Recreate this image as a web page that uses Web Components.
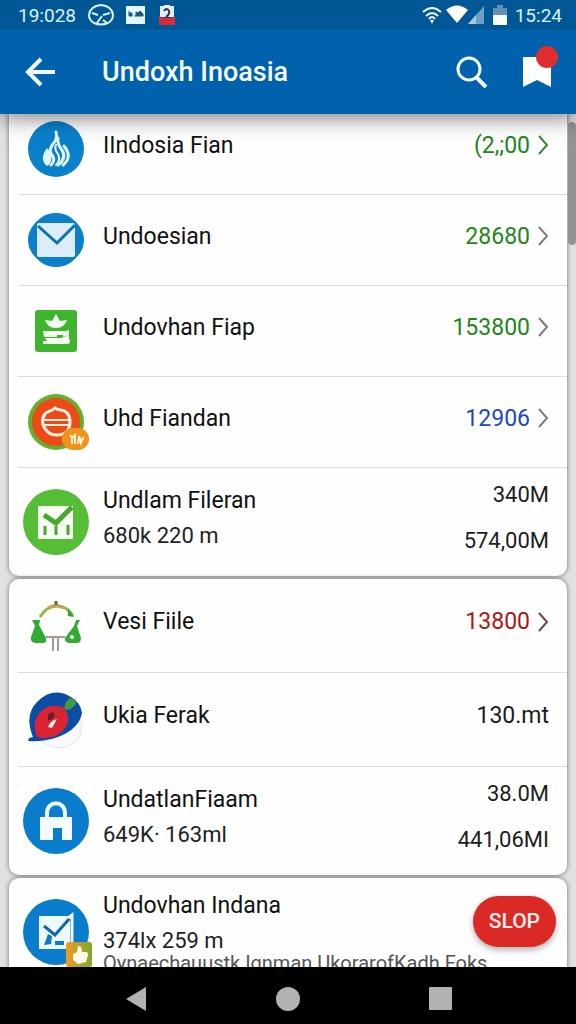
<!DOCTYPE html>
<html lang="id">
<head>
<meta charset="utf-8">
<meta name="viewport" content="width=device-width, initial-scale=1">
<title>Undoxh Inoasia</title>
<style>
  html, body {
    height: 100%;
    margin: 0;
  }
  body {
    font-family: Roboto, "Liberation Sans", sans-serif;
    color: #111;
  }
</style>
</head>
<body>
<usage-app></usage-app>

<script>
const ICONS = {
  flame: `
    <svg viewBox="0 0 56 56" width="56" height="56">
      <circle cx="28" cy="28" r="28" fill="#0a80cb"/>
      <g fill="none" stroke="#dff5fc" stroke-linecap="round">
        <path d="M28 11q2 7-3 12-5 6-1 11 4 5-1 10" stroke-width="3"/>
        <path d="M30 17q-1 6 4 12 5 8-4 15" stroke-width="3"/>
        <path d="M28 24q-2 4 2 9 3 6-2 11" stroke-width="2"/>
        <path d="M36 25q9 11-1 19" stroke-width="3"/>
      </g>
      <path d="M19 27q6 7 4 13-1 4-4 5-5-4-4-10 1-4 4-8z" fill="#dff5fc"/>
    </svg>`,
  mail: `
    <svg viewBox="0 0 56 56" width="56" height="56">
      <path d="M28 1q8 0 14 4 6 4 10 10 4 6 4 13t-4 13q-4 6-10 10-6 4-14 4t-14-4Q8 47 4 41 0 35 0 28t4-13Q8 9 14 5q6-4 14-4z" fill="#0a80cb"/>
      <rect x="9" y="11" width="38" height="34" rx="2" fill="#dcecf8"/>
      <path d="M10 14l19 17 18-18" fill="none" stroke="#0a72b8" stroke-width="3"/>
    </svg>`,
  boat: `
    <svg viewBox="0 0 44 44" width="44" height="44">
      <rect x="1" y="1" width="42" height="42" rx="3" fill="#3fb52e"/>
      <g fill="#f4fdf0">
        <path d="M22 5l4 7 7-1c-2 5-5 8-11 8s-9-3-11-8l7 1z"/>
        <path d="M9 22h23l3-1v5l-7 2H10z"/>
        <path d="M11 29h16l8-3v5l-4 4H9v-3h4z"/>
        <circle cx="33" cy="32" r="3"/>
      </g>
      <path d="M23 27h6" stroke="#3fb52e" stroke-width="2"/>
    </svg>`,
  burger: `
    <svg viewBox="-5 0 66 58" width="66" height="58">
      <circle cx="28" cy="29" r="28" fill="#62b02c"/>
      <circle cx="28" cy="29" r="24" fill="#ec4a17"/>
      <path d="M17 21c2-3 6-2 10-6 3 3 8 1 11 4 5 4 5 13 2 18-4 6-16 7-21 1-5-5-6-12-2-17z" fill="none" stroke="#fff0e6" stroke-width="3"/>
      <path d="M16 27h25M16 32h25" stroke="#fff0e6" stroke-width="2"/>
      <rect x="34" y="35" width="27" height="22" rx="11" fill="#f0931d"/>
      <path d="M42 42l2 3v6M44 45l3-3v9M50 51l1-8 2 7 2-6v3" fill="none" stroke="#fff2d0" stroke-width="2"/>
    </svg>`,
  chart: `
    <svg viewBox="0 0 66 66" width="66" height="66">
      <circle cx="33" cy="33" r="33" fill="#56bd37"/>
      <path d="M15 17h35v33H15z" fill="#f6fff2"/>
      <path d="M21 26l12 8 16-16" fill="none" stroke="#48a92e" stroke-width="5"/>
      <path d="M22 37v9M33 37v9M45 36v10" stroke="#48a92e" stroke-width="3"/>
    </svg>`,
  flasks: `
    <svg viewBox="0 0 50 52" width="50" height="52">
      <path d="M9 17q6-10 16-11t17 10" fill="none" stroke="#8dbb3a" stroke-width="3"/>
      <path d="M17 8q8-5 15 0" fill="none" stroke="#d49a55" stroke-width="3"/>
      <path d="M25 1v4" stroke="#3f7a35" stroke-width="3"/>
      <path d="M37 8l6 9-6-1z" fill="#35a437"/>
      <path d="M1 20h8l-1 5 7 13q1 5-3 5H4q-5-1-4-6l4-11z" fill="#32ab35"/>
      <path d="M45 20h4l-3 6 4 12q0 5-4 5H38q-5-1-4-5l9-12z" fill="#32ab35"/>
      <circle cx="41" cy="37" r="2" fill="#e4ffe0"/>
      <path d="M15 37h19M22 38v13M27 38v13" stroke="#a49b95" stroke-width="2"/>
    </svg>`,
  fruit: `
    <svg viewBox="0 0 56 58" width="56" height="58">
      <path d="M13 50q21-2 40-22 4 20-13 27-14 5-27-5z" fill="#fafafc" stroke="#e2e5ea" stroke-width="1"/>
      <path d="M5 46Q-4 24 9 11 25-5 43 6q10 6 11 16-3 16-24 24-13 5-30 4l1-3z" fill="#0b4ca5"/>
      <path d="M9 46q-6-16 4-26 8-6 17-5 9 2 10 11 1 9-8 16-9 7-23 4z" fill="#dc2431"/>
      <path d="M20 24q4-5 7-1-2 7-7 6z" fill="#671d28"/>
      <path d="M29 28l-5 9-4-1q2-6 9-8z" fill="#fff0ee"/>
      <path d="M27 24l12-10" stroke="#b9323b" stroke-width="2"/>
      <path d="M37 13l4-6 6 1 1 5-5 5-6 1z" fill="#409d3d"/>
    </svg>`,
  lock: `
    <svg viewBox="0 0 66 66" width="66" height="66">
      <circle cx="33" cy="33" r="33" fill="#0a7ccc"/>
      <path d="M24 31v-6c0-13 18-13 18 0v6" fill="none" stroke="#e9f7ff" stroke-width="4"/>
      <path d="M17 29h32v23H39V40h-9v12H17z" fill="#f5fbff"/>
    </svg>`,
  report: `
    <svg viewBox="-4 -4 74 74" width="74" height="74">
      <circle cx="33" cy="33" r="33" fill="#0a7ccc"/>
      <path d="M16 17h31v33H16z" fill="#eef8ff"/>
      <path d="M21 27l11 9 15-17" fill="none" stroke="#0b66ae" stroke-width="3"/>
      <path d="M25 35l4 2-1 8-7 1zM32 42h9v4h-9z" fill="#0b7cc8"/>
      <path d="M45 19l4-3v34" fill="none" stroke="#eef8ff" stroke-width="3"/>
      <linearGradient id="tile" x2="1" y2="0">
        <stop stop-color="#ee9a25"/>
        <stop offset="1" stop-color="#7da72d"/>
      </linearGradient>
      <rect x="43" y="43" width="26" height="25" rx="3" fill="url(#tile)"/>
      <path d="M50 55l4-2 1-6q4-1 4 6h4q2 0 2 3l-2 7-8 2-5-4z" fill="#fffbe8"/>
    </svg>`
};

class StatusBar extends HTMLElement {
  constructor() {
    super();

    this.attachShadow({mode: 'open'}).innerHTML = `
      <style>
        :host {
          display: flex;
          align-items: center;
          justify-content: space-between;
          height: 30px;
          padding: 0 14px 0 18px;
          background: #005795;
          color: #d9f3ff;
          font-size: 19px;
        }
        div {
          display: flex;
          align-items: center;
          gap: 12px;
        }
        .signals {
          gap: 4px;
        }
        svg {
          display: block;
        }
        .battery {
          margin: 0 4px;
        }
      </style>
      <div>
        <span>19:028</span>
        <svg viewBox="0 0 26 22" width="26" height="22" fill="none" stroke="#d9f3ff" stroke-width="2">
          <path d="M6 19Q1 16 1 11 2 2 13 1q11 1 12 10 0 5-5 8-7 3-14 0z"/>
          <path d="M4 9l6 2M15 11l7-2M9 19l5-7M15 16l4 3"/>
        </svg>
        <svg viewBox="0 0 20 18" width="20" height="18">
          <path d="M0 0h19v18H0z" fill="#e1f6ff"/>
          <path d="M3 5v5h3V7H3m5 3h9V8l-3-3-2 2-2-1v4" fill="#1a5680" stroke="#1a5680" stroke-width="1"/>
        </svg>
        <svg viewBox="0 0 18 20" width="18" height="20">
          <path d="M2 1h4V0h6v1h4v11H2z" fill="#e6eef4"/>
          <path d="M1 11l4 2h8l4-2v9H1z" fill="#da2c38"/>
          <path d="M6 6q3-4 5 0 1 3-3 6" fill="none" stroke="#27384b" stroke-width="2"/>
        </svg>
      </div>
      <div class="signals">
        <svg viewBox="0 0 20 18" width="20" height="18" fill="none" stroke="#e8f8ff" stroke-width="2">
          <path d="M1 6q9-8 18 0M4 10q6-6 12 0M7 13q3-4 6 0"/>
          <path d="M8 14h4l-2 4z" fill="#e8f8ff" stroke="none"/>
        </svg>
        <svg viewBox="0 0 39 20" width="39" height="20">
          <path d="M0 5q11-9 22 0L11 18z" fill="#fff"/>
          <path d="M22 19L38 1v18z" fill="#6f9fc4"/>
          <path d="M22 19l8-9v9z" fill="#a9cbe2"/>
        </svg>
        <svg class="battery" viewBox="0 0 14 20" width="14" height="20">
          <path d="M0 3h4V0h6v3h4v8H0z" fill="#6290b5"/>
          <path d="M0 10h14v10H0z" fill="#fff"/>
        </svg>
        <span>15:24</span>
      </div>
    `;
  }
}

class AppBar extends HTMLElement {
  constructor() {
    super();

    this.attachShadow({mode: 'open'}).innerHTML = `
      <style>
        :host {
          display: flex;
          align-items: center;
          height: 84px;
          padding: 0 19px 0 20px;
          background: #0062ad;
          color: #f4fcff;
        }
        h1 {
          flex: 1;
          margin: 0 0 0 42px;
          font-size: 27px;
          font-weight: 500;
          line-height: 32px;
        }
        button {
          position: relative;
          width: 40px;
          height: 40px;
          padding: 0;
          border: 0;
          background: none;
        }
        svg {
          display: block;
          margin: auto;
        }
        .saved {
          margin-left: 25px;
        }
        .dot {
          position: absolute;
          top: -6px;
          right: -1px;
          width: 22px;
          height: 22px;
          border-radius: 50%;
          background: #e02d30;
        }
      </style>
      <button type="button" aria-label="Kembali">
        <svg viewBox="0 0 30 30" width="30" height="30" fill="none" stroke="#f4fcff" stroke-width="4">
          <path d="M30 15H3M16 2L3 15l13 13"/>
        </svg>
      </button>
      <h1><slot></slot></h1>
      <button type="button" aria-label="Cari">
        <svg viewBox="0 0 32 32" width="32" height="32" fill="none" stroke="#f4fcff">
          <circle cx="13" cy="13" r="11" stroke-width="3"/>
          <path d="M20 21l10 10" stroke-width="4"/>
        </svg>
      </button>
      <button class="saved" type="button" aria-label="Tersimpan">
        <svg viewBox="0 0 28 30" width="28" height="30">
          <path d="M0 0h28v30l-14-7-14 7z" fill="#fff"/>
        </svg>
        <span class="dot"></span>
      </button>
    `;
  }
}

class ItemIcon extends HTMLElement {
  constructor() {
    super();

    this.attachShadow({mode: 'open'});
  }

  connectedCallback() {
    this.shadowRoot.innerHTML = `
      <style>
        :host {
          display: flex;
          align-items: center;
          justify-content: center;
          width: 66px;
          height: 66px;
        }
        svg {
          display: block;
          flex: none;
        }
      </style>
      ${ICONS[this.getAttribute('name')] || ''}
    `;
  }
}

class ListCard extends HTMLElement {
  constructor() {
    super();

    this.attachShadow({mode: 'open'}).innerHTML = `
      <style>
        :host {
          display: block;
          padding-left: 9px;
          border-radius: 10px;
          background: #fefefe;
          box-shadow: 0 0 5px rgba(0, 0, 0, 0.5);
        }
      </style>
      <slot></slot>
    `;
  }
}

class ListRow extends HTMLElement {
  constructor() {
    super();

    this.attachShadow({mode: 'open'}).innerHTML = `
      <style>
        :host {
          --value-color: #1c1c1c;
          --chevron-color: #7c7c7c;
          display: flex;
          align-items: center;
          box-sizing: border-box;
          min-height: var(--row-height, 91px);
          padding: 0 18px 0 5px;
          border-bottom: 1px solid #dadcdc;
          font-size: 23px;
          line-height: 35px;
        }
        :host(:last-child) {
          border-bottom: 0;
        }
        :host([tall]) {
          min-height: 108px;
        }
        :host([tone="green"]) {
          --value-color: #22861a;
        }
        :host([tone="blue"]) {
          --value-color: #2148bd;
        }
        :host([tone="red"]) {
          --value-color: #ad1713;
          --chevron-color: #6d4747;
        }
        .text {
          flex: 1;
          min-width: 0;
          padding: 0 0 8px 14px;
          white-space: nowrap;
        }
        .value {
          padding-bottom: 8px;
          color: var(--value-color);
          text-align: right;
        }
        :host([tall]) .value {
          font-size: 22px;
          line-height: 46px;
        }
        a {
          display: flex;
          align-items: center;
          gap: 7px;
          color: inherit;
          text-decoration: none;
        }
        svg {
          display: none;
        }
        :host([href]) svg {
          display: block;
        }
        ::slotted(span) {
          display: block;
        }
      </style>
      <slot name="icon"></slot>
      <div class="text"><slot></slot></div>
      <div class="value">
        <slot name="action"></slot>
        <a>
          <span><slot name="value"></slot></span>
          <svg viewBox="0 0 12 20" width="12" height="20" fill="none" stroke="var(--chevron-color)" stroke-width="2">
            <path d="M2 1l8 9-8 9"/>
          </svg>
        </a>
      </div>
    `;
  }

  connectedCallback() {
    if(this.hasAttribute('href')) {
      this.shadowRoot.querySelector('a').href = this.getAttribute('href');
    }
  }
}

class NavBar extends HTMLElement {
  constructor() {
    super();

    this.attachShadow({mode: 'open'}).innerHTML = `
      <style>
        :host {
          display: flex;
          align-items: center;
          justify-content: center;
          gap: 128px;
          height: 57px;
          background: #000;
        }
        button {
          width: 24px;
          height: 24px;
          margin-top: 6px;
          padding: 0;
          border: 0;
          background: none;
        }
        svg {
          display: block;
          fill: #b2b2b2;
        }
      </style>
      <button type="button" aria-label="Kembali">
        <svg viewBox="0 0 24 24" width="24" height="24"><path d="M2 12L22 0v24z"/></svg>
      </button>
      <button type="button" aria-label="Beranda">
        <svg viewBox="0 0 24 24" width="24" height="24"><circle cx="12" cy="12" r="12"/></svg>
      </button>
      <button type="button" aria-label="Terbaru">
        <svg viewBox="0 0 24 24" width="24" height="24"><rect x="1" width="23" height="23" rx="1"/></svg>
      </button>
    `;
  }
}

class UsageApp extends HTMLElement {
  constructor() {
    super();

    this.attachShadow({mode: 'open'}).innerHTML = `
      <style>
        :host {
          display: flex;
          flex-direction: column;
          height: 100vh;
          overflow: hidden;
        }
        header {
          position: relative;
          z-index: 1;
          box-shadow: 0 4px 20px rgba(0, 0, 0, 0.5);
        }
        main {
          position: relative;
          flex: 1;
          min-height: 0;
          overflow: hidden;
          background: #dfe1e4;
        }
        /* list is scrolled a little, so the first row slides under the bar */
        .list {
          display: flex;
          flex-direction: column;
          gap: 3px;
          margin-top: -10px;
          padding: 0 9px;
        }
        .roomy {
          --row-height: 94px;
        }
        .thumb {
          position: absolute;
          top: 8px;
          right: 0;
          width: 8px;
          height: 123px;
          border-radius: 4px;
          background: #919396;
        }
        .sub {
          color: #222;
          font-size: 22px;
        }
        .note {
          width: 0;
          color: #555;
          font-size: 20px;
          line-height: 10px;
        }
        .stop {
          height: 51px;
          margin: 0 -7px 14px 0;
          padding: 0 16px;
          border: 0;
          border-radius: 26px;
          background: #db2925;
          box-shadow: 0 3px 6px rgba(0, 0, 0, 0.3);
          color: #fff0ec;
          font: 500 21px Roboto, "Liberation Sans", sans-serif;
        }
      </style>
      <header>
        <status-bar></status-bar>
        <app-bar>Undoxh Inoasia</app-bar>
      </header>
      <main>
        <div class="list">
          <list-card>
            <list-row href="#1" tone="green" style="--chevron-color: #3b8b35">
              <item-icon slot="icon" name="flame"></item-icon>
              <span>IIndosia Fian</span>
              <span slot="value">(2,;00</span>
            </list-row>
            <list-row href="#2" tone="green">
              <item-icon slot="icon" name="mail"></item-icon>
              <span>Undoesian</span>
              <span slot="value">28680</span>
            </list-row>
            <list-row href="#3" tone="green">
              <item-icon slot="icon" name="boat"></item-icon>
              <span>Undovhan Fiap</span>
              <span slot="value">153800</span>
            </list-row>
            <list-row href="#4" tone="blue">
              <item-icon slot="icon" name="burger"></item-icon>
              <span>Uhd Fiandan</span>
              <span slot="value">12906</span>
            </list-row>
            <list-row tall>
              <item-icon slot="icon" name="chart"></item-icon>
              <span>Undlam Fileran</span>
              <span class="sub">680k 220 m</span>
              <span slot="value">340M</span>
              <span slot="value">574,00M</span>
            </list-row>
          </list-card>
          <list-card class="roomy">
            <list-row href="#6" tone="red">
              <item-icon slot="icon" name="flasks"></item-icon>
              <span>Vesi Fiile</span>
              <span slot="value">13800</span>
            </list-row>
            <list-row>
              <item-icon slot="icon" name="fruit"></item-icon>
              <span>Ukia Ferak</span>
              <span slot="value">130.mt</span>
            </list-row>
            <list-row tall>
              <item-icon slot="icon" name="lock"></item-icon>
              <span>UndatlanFiaam</span>
              <span class="sub">649K· 163ml</span>
              <span slot="value">38.0M</span>
              <span slot="value">441,06MI</span>
            </list-row>
          </list-card>
          <list-card>
            <list-row tall>
              <item-icon slot="icon" name="report"></item-icon>
              <span>Undovhan Indana</span>
              <span class="sub">374lx 259 m</span>
              <span class="note">Oynaechauustk Ignman UkorarofKadh Foks</span>
              <button slot="action" class="stop" type="button">SLOP</button>
            </list-row>
          </list-card>
        </div>
        <div class="thumb"></div>
      </main>
      <nav-bar></nav-bar>
    `;
  }
}

customElements.define('status-bar', StatusBar);
customElements.define('app-bar', AppBar);
customElements.define('item-icon', ItemIcon);
customElements.define('list-card', ListCard);
customElements.define('list-row', ListRow);
customElements.define('nav-bar', NavBar);
customElements.define('usage-app', UsageApp);
</script>
</body>
</html>
